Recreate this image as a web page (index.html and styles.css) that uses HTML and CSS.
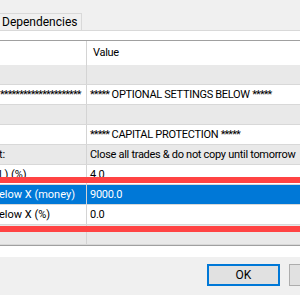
FILE: index.html
```
<!DOCTYPE html>
<html lang="en">
<head>
  <meta charset="UTF-8">
  <title>Inputs</title>
  <link rel="stylesheet" href="styles.css">
</head>
<body>
  <div class="tabbar">
    <div class="tab">Dependencies</div>
  </div>

  <div class="page">
    <div class="grid">
      <div class="row head"><div class="name"></div><div class="value head-value">Value</div></div>
      <div class="row shaded"><div class="name"></div><div class="value"></div></div>
      <div class="row"><div class="name stars">*********************</div><div class="value"><span class="stars">*****</span> OPTIONAL SETTINGS BELOW <span class="stars">*****</span></div></div>
      <div class="row shaded"><div class="name"></div><div class="value"></div></div>
      <div class="row"><div class="name"></div><div class="value"><span class="stars">*****</span> CAPITAL PROTECTION <span class="stars">*****</span></div></div>
      <div class="row shaded"><div class="name cut">t:</div><div class="value">Close all trades &amp; do not copy until tomorrow</div></div>
      <div class="row"><div class="name cut">l ) (%)</div><div class="value">4.0</div></div>
      <div class="row selected"><div class="name cut">elow X (money)</div><div class="value">9000.0</div></div>
      <div class="row"><div class="name cut">elow X (%)</div><div class="value">0.0</div></div>
      <div class="row shaded"><div class="name"></div><div class="value"></div></div>
    </div>

    <div class="mark mark-top"></div>
    <div class="mark mark-bottom"></div>
  </div>

  <div class="footer">
    <button class="btn default">OK</button>
    <button class="btn">Cancel</button>
  </div>
</body>
</html>
```

FILE: styles.css
```
html, body {
  margin: 0;
  padding: 0;
  width: 300px;
  height: 295px;
  overflow: hidden;
  background-color: #f0f0f0;
  color: #000;
  font-family: Roboto, 'Liberation Sans', sans-serif;
  font-size: 11px;
}

.tabbar {
  height: 30px;
  border-bottom: 1px solid #d9d9d9;
  display: flex;
  align-items: flex-end;
}

.tab {
  height: 16px;
  line-height: 16px;
  margin-left: -4px;
  padding: 0 4px 0 5px;
  border: 1px solid #d9d9d9;
  border-bottom: none;
  font-size: 12px;
}

.page {
  position: relative;
  background-color: #fff;
  padding: 9px 0 11px;
}

.grid {
  border-top: 1px solid #a0a0a0;
  border-bottom: 1px solid #a0a0a0;
}

.row {
  display: grid;
  grid-template-columns: 87px 1fr;
  height: 20px;
  box-sizing: border-box;
  border-bottom: 1px solid #d8d8d8;
}

.row.head {
  height: 24px;
  border-bottom: none;
}

.row.shaded {
  background-color: #e9e9e9;
}

.row.selected {
  background-color: #0078d7;
  color: #fff;
}

.name, .value {
  line-height: 19px;
  white-space: nowrap;
  overflow: hidden;
}

.head .value {
  line-height: 24px;
}

.name {
  border-right: 1px solid #d4d4d4;
}

.name.cut {
  text-indent: -1px;
}

.value {
  padding-left: 3px;
  letter-spacing: -0.3px;
}

.head-value {
  padding-left: 6px;
}

.stars {
  letter-spacing: -0.9px;
}

.mark {
  position: absolute;
  left: 0;
  right: 0;
  height: 6px;
  background-color: #ff4343;
}

.mark-top {
  top: 146px;
}

.mark-bottom {
  top: 195px;
}

.footer {
  display: flex;
  justify-content: flex-end;
  gap: 9px;
  padding-top: 7px;
  margin-right: -62px;
}

.btn {
  width: 73px;
  height: 22px;
  margin: 0;
  padding: 0;
  background-color: #e1e1e1;
  border: 1px solid #adadad;
  font-family: Roboto, 'Liberation Sans', sans-serif;
  font-size: 12px;
  color: #000;
}

.btn.default {
  border: 2px solid #0078d7;
}
```
